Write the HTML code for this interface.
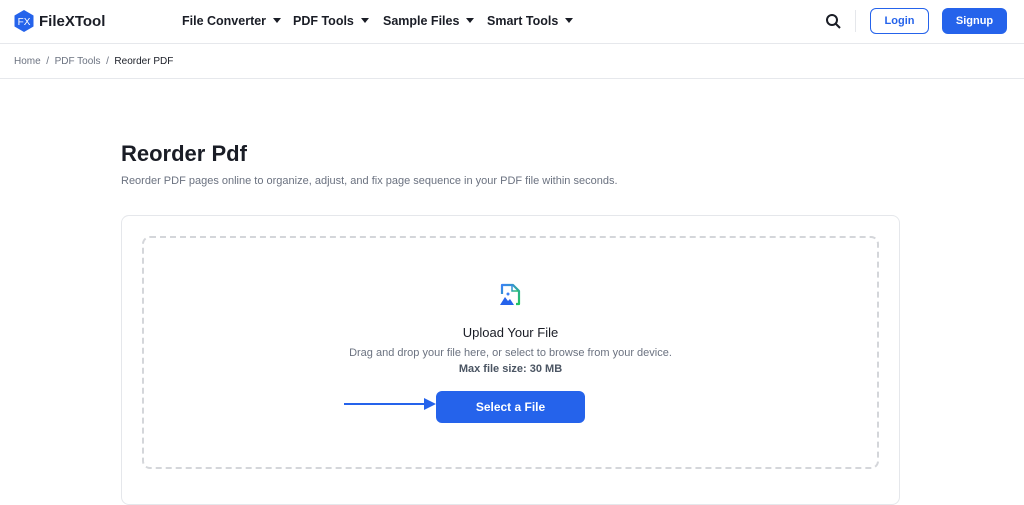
<!DOCTYPE html>
<html><head><meta charset="utf-8"><style>
*{box-sizing:border-box;margin:0;padding:0}
body{width:1024px;height:490px;overflow:hidden;background:#fff;font-family:"Liberation Sans",sans-serif;color:#1a1d26;position:relative}
.hdr{position:absolute;top:0;left:0;right:0;height:44px;border-bottom:1px solid #e6e8ec}
.abs{position:absolute}
.nav{font-size:12.5px;font-weight:bold;color:#1a1d26;top:14px}
.nav:after{content:"";display:inline-block;margin-left:7px;border:4px solid transparent;border-top:5px solid #1a1d26;border-bottom:0;vertical-align:2px}
.bc{top:45px;left:0;right:0;height:34px;border-bottom:1px solid #e6e8ec;font-size:10px;color:#6b7280;padding:11px 14px}
</style></head><body>
<div class="hdr">
 <svg class="abs" style="left:13px;top:10px" width="22" height="22" viewBox="0 0 22 22"><polygon points="11,0 20.5,5.5 20.5,16.5 11,22 1.5,16.5 1.5,5.5" fill="#2563eb"/><text x="11" y="15" font-size="10" fill="#fff" text-anchor="middle" font-family="Liberation Sans">FX</text></svg>
 <div class="abs" style="left:39px;top:13px;font-size:15px;font-weight:bold">FileXTool</div>
 <div class="abs nav" style="left:182px">File Converter</div>
 <div class="abs nav" style="left:293px">PDF Tools</div>
 <div class="abs nav" style="left:383px">Sample Files</div>
 <div class="abs nav" style="left:487px">Smart Tools</div>
 <svg class="abs" style="left:825px;top:13px" width="16" height="16" viewBox="0 0 16 16"><circle cx="7" cy="7" r="5" fill="none" stroke="#1a1d26" stroke-width="2"/><line x1="11" y1="11" x2="15" y2="15" stroke="#1a1d26" stroke-width="2"/></svg>
 <div class="abs" style="left:855px;top:10px;width:1px;height:22px;background:#e5e7eb"></div>
 <div class="abs" style="left:870px;top:8px;width:59px;height:26px;border:1px solid #2563eb;border-radius:6px;color:#2563eb;font-size:11px;font-weight:bold;text-align:center;line-height:24px">Login</div>
 <div class="abs" style="left:942px;top:8px;width:65px;height:26px;background:#2563eb;border-radius:6px;color:#fff;font-size:11px;font-weight:bold;text-align:center;line-height:26px">Signup</div>
</div>
<div class="abs bc">Home &nbsp;/&nbsp; PDF Tools &nbsp;/&nbsp; <span style="color:#1a1d26">Reorder PDF</span></div>
<div class="abs" style="left:121px;top:141px;font-size:22px;font-weight:bold">Reorder Pdf</div>
<div class="abs" style="left:121px;top:175px;font-size:11px;color:#6b7280">Reorder PDF pages online to organize, adjust, and fix page sequence in your PDF file within seconds.</div>
<div class="abs" style="left:121px;top:215px;width:779px;height:290px;border:1px solid #e5e7eb;border-radius:8px"></div>
<div class="abs" style="left:142px;top:236px;width:737px;height:233px;border:2px dashed #d4d6da;border-radius:8px"></div>
<svg class="abs" style="left:498px;top:283px" width="24" height="24" viewBox="0 0 24 24"><defs><linearGradient id="g" x1="0" y1="0" x2="1" y2="1"><stop offset="0" stop-color="#3b82f6"/><stop offset="1" stop-color="#22c55e"/></linearGradient></defs><path d="M4 11V2h11l6 6v13h-3" fill="none" stroke="url(#g)" stroke-width="2.2" stroke-linejoin="round"/><path d="M14 2v6h6" fill="none" stroke="url(#g)" stroke-width="1.5"/><path d="M2 22l5-8 3 4 2-2 4 6z" fill="#2563eb"/><circle cx="10" cy="11" r="1.5" fill="#3b82f6"/></svg>
<div class="abs" style="left:0;width:1021px;top:325px;text-align:center;font-size:13px">Upload Your File</div>
<div class="abs" style="left:0;width:1021px;top:347px;text-align:center;font-size:11px;color:#6b7280">Drag and drop your file here, or select to browse from your device.</div>
<div class="abs" style="left:0;width:1021px;top:363px;text-align:center;font-size:11px;color:#4b5563;font-weight:bold">Max file size: 30 MB</div>
<svg class="abs" style="left:344px;top:398px" width="92" height="12"><line x1="0" y1="6" x2="82" y2="6" stroke="#2563eb" stroke-width="2"/><polygon points="80,0 92,6 80,12" fill="#2563eb"/></svg>
<div class="abs" style="left:436px;top:391px;width:149px;height:32px;background:#2563eb;border-radius:6px;color:#fff;font-size:12px;font-weight:bold;text-align:center;line-height:32px">Select a File</div>
</body></html>
